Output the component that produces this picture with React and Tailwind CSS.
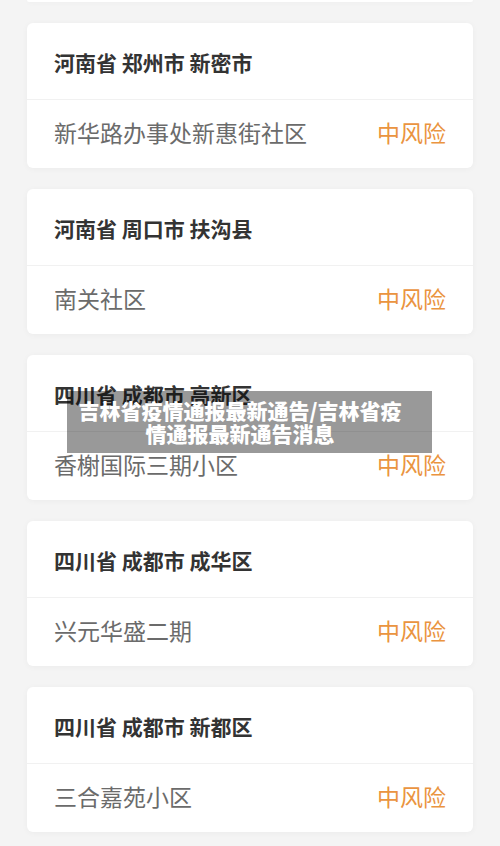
import React from 'react';

const items = [
  { title: '河南省 郑州市 新密市', place: '新华路办事处新惠街社区' },
  { title: '河南省 周口市 扶沟县', place: '南关社区' },
  { title: '四川省 成都市 高新区', place: '香榭国际三期小区' },
  { title: '四川省 成都市 成华区', place: '兴元华盛二期' },
  { title: '四川省 成都市 新都区', place: '三合嘉苑小区' },
];

const font = { fontFamily: '"Noto Sans CJK SC", "Noto Sans", sans-serif' };

export default function App() {
  return (
    <div className="relative w-[500px] h-[846px] overflow-hidden bg-[#f4f4f4]" style={font}>
      <div className="px-[27px]">
        {/* tail of the card above */}
        <div className="h-[2px] bg-white rounded-b-md shadow-[0_1px_4px_rgba(0,0,0,0.04)]"></div>

        <div className="flex flex-col gap-[21px] mt-[21px]">
          {items.map((it, i) => (
            <div key={i} className="bg-white rounded-md shadow-[0_1px_6px_rgba(0,0,0,0.04)]">
              <div className="h-[77px] flex items-center pt-[4px] px-[27px] border-b border-[#f1f1f1]">
                <span className="text-[21px] font-bold text-[#333333] whitespace-pre">{it.title}</span>
              </div>
              <div className="h-[68px] flex items-center justify-between pb-[3px] px-[27px]">
                <span className="text-[23px] text-[#6b6b6b]">{it.place}</span>
                <span className="text-[23px] text-[#ea9440]">中风险</span>
              </div>
            </div>
          ))}
        </div>
      </div>

      {/* caption overlay */}
      <div className="absolute left-[67px] top-[391px] w-[365px] h-[62px] bg-[rgba(0,0,0,0.4)] flex items-center justify-center pr-[19px]">
        <p className="text-white text-[21px] font-black leading-[23px] text-center">
          吉林省疫情通报最新通告/吉林省疫<br />情通报最新通告消息
        </p>
      </div>
    </div>
  );
}
